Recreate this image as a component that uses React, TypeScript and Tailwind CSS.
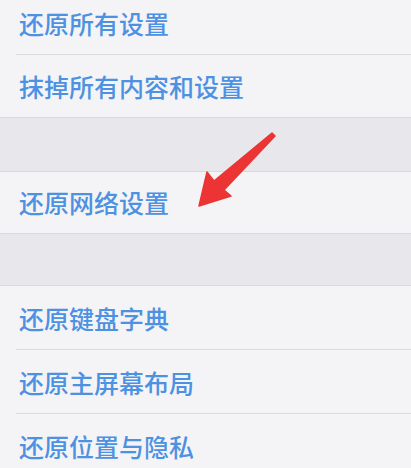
import React from "react";

const font = { fontFamily: '"Noto Sans CJK SC", "Noto Sans", sans-serif' };

function Row({ text, h, divider, pb }: { text: string; h: string; divider?: boolean; pb?: string }) {
  return (
    <div className={`relative flex items-center pl-[19px] ${h} ${pb ?? ""}`}>
      <span className="text-[25px] leading-none font-medium text-[#4d91e2]">{text}</span>
      {divider && <div className="absolute bottom-0 left-[16px] right-0 h-px bg-[#dcdcdf]" />}
    </div>
  );
}

export default function App() {
  return (
    <div className="relative w-[411px] h-[468px] overflow-hidden bg-[#e8e8ec]" style={font}>
      <div className="bg-[#f4f4f6] border-b border-[#d9d9dd]">
        <Row text="还原所有设置" h="h-[55px]" pb="pb-[8px]" divider />
        <Row text="抹掉所有内容和设置" h="h-[62px]" />
      </div>
      <div className="h-[53px]" />
      <div className="bg-[#f4f4f6] border-y border-[#d9d9dd]">
        <Row text="还原网络设置" h="h-[61px]" />
      </div>
      <div className="h-[51px]" />
      <div className="bg-[#f4f4f6] border-t border-[#d9d9dd]">
        <Row text="还原键盘字典" h="h-[64px]" divider />
        <Row text="还原主屏幕布局" h="h-[64px]" divider />
        <Row text="还原位置与隐私" h="h-[64px]" />
      </div>
      <svg className="absolute left-0 top-0" width="411" height="468" viewBox="0 0 411 468">
        <polygon
          points="272,133 275,136 224,190 231,196 199,206 207,172 214,181"
          fill="#ec3434"
          stroke="#ec3434"
          strokeWidth="1.5"
          strokeLinejoin="round"
        />
      </svg>
    </div>
  );
}
